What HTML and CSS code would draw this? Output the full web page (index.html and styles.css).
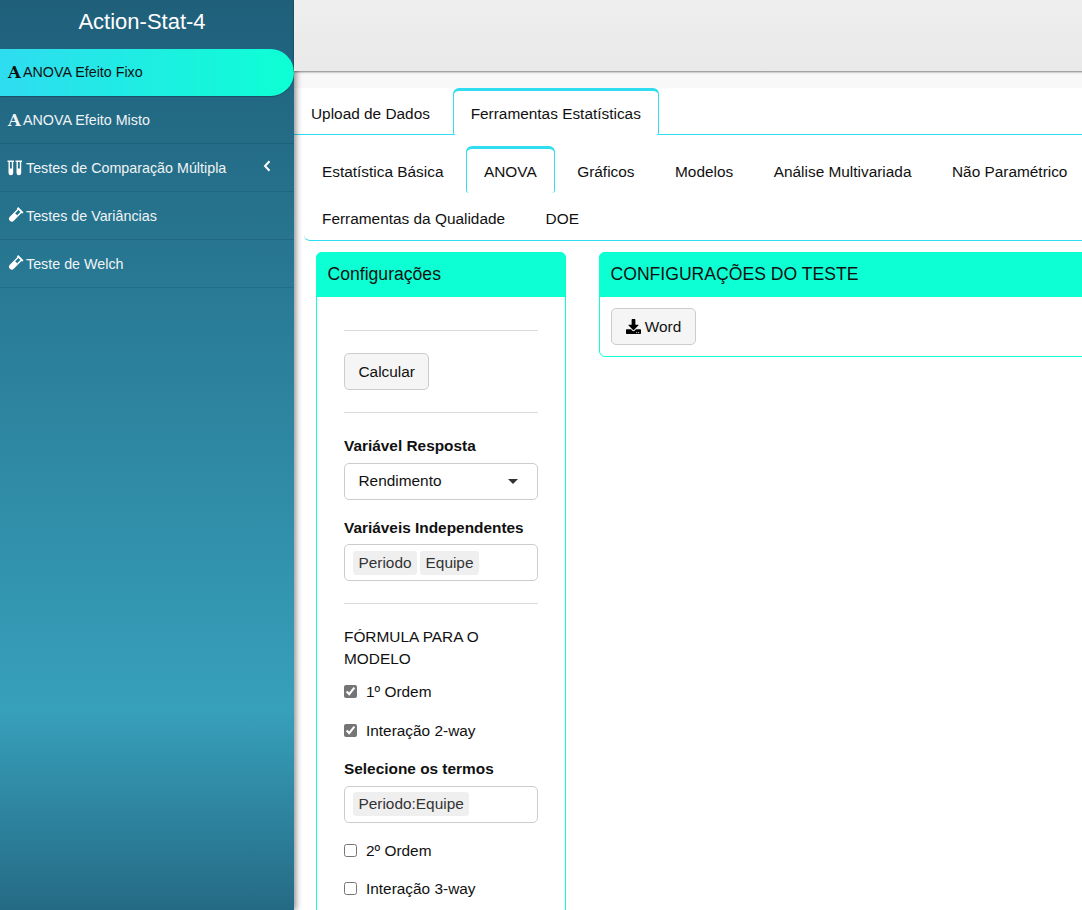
FILE: index.html
```html
<!DOCTYPE html>
<html lang="pt">
<head>
  <meta charset="UTF-8">
  <title>Action-Stat-4</title>
  <link rel="stylesheet" href="styles.css">
</head>
<body>
  <!-- menu lateral -->
  <aside class="sidebar">
    <div class="brand">Action-Stat-4</div>
    <ul class="side-menu">
      <li class="side-item active"><span class="font-icon">A</span> ANOVA Efeito Fixo</li>
      <li class="side-item"><span class="font-icon">A</span> ANOVA Efeito Misto</li>
      <li class="side-item">
        <svg class="side-icon" viewBox="0 0 15 16"><path d="M0.500 0.500h6.500v1.500h-0.800v11a2.350 2.350 0 0 1-4.700 0V2H0.500zM2.900 2v6.500h1.900V2zM8.500 0.500h6.500v1.500h-0.800v11a2.350 2.350 0 0 1-4.700 0V2H8.500zM10.900 2v6.500h1.900V2z" fill="#fff" fill-rule="evenodd"/></svg>
        Testes de Comparação Múltipla
        <svg class="chevron" viewBox="0 0 8 12"><path d="M6.500 1.200L2 6l4.500 4.800" fill="none" stroke="#fff" stroke-width="2"/></svg>
      </li>
      <li class="side-item">
        <svg class="side-icon" viewBox="0 0 16 16"><path transform="rotate(45 8 8)" d="M4 -1.500h8v2h-1V12a3 3 0 0 1-6 0V0.500H4zM6.500 0.500v5h3v-5z" fill="#fff" fill-rule="evenodd"/></svg>
        Testes de Variâncias
      </li>
      <li class="side-item">
        <svg class="side-icon" viewBox="0 0 16 16"><path transform="rotate(45 8 8)" d="M4 -1.500h8v2h-1V12a3 3 0 0 1-6 0V0.500H4zM6.500 0.500v5h3v-5z" fill="#fff" fill-rule="evenodd"/></svg>
        Teste de Welch
      </li>
    </ul>
  </aside>

  <div class="page">
    <header class="topbar"></header>

    <main class="content">
      <!-- abas principais -->
      <ul class="tabs main-tabs">
        <li class="tab">Upload de Dados</li>
        <li class="tab active">Ferramentas Estatísticas</li>
      </ul>

      <ul class="tabs sub-tabs">
        <li class="tab">Estatística Básica</li>
        <li class="tab active">ANOVA</li>
        <li class="tab">Gráficos</li>
        <li class="tab">Modelos</li>
        <li class="tab">Análise Multivariada</li>
        <li class="tab">Não Paramétrico</li>
        <li class="tab">Ferramentas da Qualidade</li>
        <li class="tab">DOE</li>
      </ul>

      <div class="panels">
        <section class="panel">
          <h3 class="panel-title">Configurações</h3>
          <div class="panel-body config-body">
            <hr>
            <button class="btn">Calcular</button>
            <hr>
            <div class="field-label">Variável Resposta</div>
            <div class="select-box single">Rendimento<span class="caret"></span></div>
            <div class="field-label">Variáveis Independentes</div>
            <div class="select-box">
              <span class="tag">Periodo</span>
              <span class="tag">Equipe</span>
            </div>
            <hr>
            <p class="formula-title">FÓRMULA PARA O MODELO</p>
            <label class="check"><input type="checkbox" checked> 1º Ordem</label>
            <label class="check"><input type="checkbox" checked> Interação 2-way</label>
            <div class="field-label">Selecione os termos</div>
            <div class="select-box">
              <span class="tag">Periodo:Equipe</span>
            </div>
            <label class="check"><input type="checkbox"> 2º Ordem</label>
            <label class="check"><input type="checkbox"> Interação 3-way</label>
          </div>
        </section>

        <section class="panel">
          <h3 class="panel-title">CONFIGURAÇÕES DO TESTE</h3>
          <div class="panel-body">
            <button class="btn">
              <svg class="btn-icon" viewBox="0 0 512 512"><path d="M216 0h80c13.300 0 24 10.700 24 24v168h87.700c17.800 0 26.700 21.500 14.100 34.100L269.700 378.300c-7.500 7.500-19.800 7.500-27.300 0L90.100 226.100c-12.600-12.600-3.700-34.100 14.100-34.100H192V24c0-13.300 10.700-24 24-24zm296 376v112c0 13.300-10.700 24-24 24H24c-13.300 0-24-10.700-24-24V376c0-13.300 10.700-24 24-24h146.700l49 49c20.100 20.100 52.500 20.100 72.600 0l49-49H488c13.300 0 24 10.700 24 24zm-124 88c0-11-9-20-20-20s-20 9-20 20 9 20 20 20 20-9 20-20zm64 0c0-11-9-20-20-20s-20 9-20 20 9 20 20 20 20-9 20-20z"/></svg>
              Word
            </button>
          </div>
        </section>
      </div>
    </main>
  </div>
</body>
</html>
```

FILE: styles.css
```css
/* geral */
body {
  margin: 0;
  display: flex;
  height: 910px;
  overflow: hidden;
  background-color: white;
  color: #111;
  font-family: 'Liberation Sans', Arial, sans-serif;
  font-size: 15.400px;
  line-height: 21px;
}

/* menu lateral */
.sidebar {
  position: relative;
  z-index: 2;
  flex: 0 0 294px;
  background: linear-gradient(to bottom, #1f5f7a 0%, #37a0bb 78%, #256a85 100%);
  box-shadow: 2px 0 6px rgba(0, 0, 0, 0.45);
}

.brand {
  height: 49px;
  padding: 7px 10px 0 0;
  box-sizing: border-box;
  text-align: center;
  color: white;
  font-size: 22px;
  line-height: 30px;
}

.side-menu {
  list-style: none;
  margin: 0;
  padding: 0;
}

.side-item {
  display: flex;
  align-items: center;
  gap: 3px;
  height: 48px;
  padding: 1px 0 0 8px;
  border-bottom: 1px solid rgba(0, 40, 60, 0.15);
  box-sizing: border-box;
  color: #f0f4f5;
  font-size: 14.300px;
}

.side-item.active {
  height: 47px;
  padding-top: 0;
  border-bottom: none;
  border-radius: 0 24px 24px 0;
  background: linear-gradient(to right, #2fdcf0, #0dffd4);
  box-shadow: 0 1px 1px rgba(0, 0, 0, 0.25);
  color: #111;
}

.font-icon {
  width: 12px;
  font-family: 'DejaVu Serif', serif;
  font-size: 16.500px;
  font-weight: bold;
}

.side-icon {
  width: 15px;
  height: 16px;
  margin-left: -1px;
  margin-right: 1px;
  overflow: visible;
}

.chevron {
  width: 8px;
  height: 12px;
  margin-left: 34px;
  margin-top: -5px;
}

/* topo */
.page {
  flex: 0 0 800px;
  width: 800px;
}

.topbar {
  position: relative;
  z-index: 3;
  height: 71px;
  background: linear-gradient(to bottom, #eeeeee, #e9e9e9);
  box-shadow: 0 1px 2px rgba(0, 0, 0, 0.5);
}

.content {
  border-top: 17px solid #f8f8f8;
}

/* abas */
.tabs {
  list-style: none;
  margin: 0;
  padding: 0;
  display: flex;
  flex-wrap: wrap;
  border-bottom: 1px solid #2fdcf0;
}

.tab {
  padding: 12px 17px 11px;
  border: 1px solid transparent;
  border-top-width: 3px;
  border-bottom: none;
  border-radius: 6px 6px 3px 3px;
  color: #111;
}

.tab.active {
  border-color: #2fdcf0;
  background-color: white;
}

.main-tabs {
  gap: 4.700px;
  height: 46px;
  margin-left: -1px;
}

.main-tabs .tab.active {
  height: 47px;
  box-sizing: border-box;
}

.sub-tabs {
  gap: 0 4.500px;
  margin: 11px 0 0 10px;
  border-radius: 0 0 0 6px;
}

/* paineis */
.panels {
  display: grid;
  grid-template-columns: 250px 1fr;
  gap: 33px;
  margin: 11px 0 0 22px;
}

.panel {
  border: 1px solid #0dffd4;
  border-radius: 6px;
  align-self: start;
}

.panel-title {
  margin: -1px -1px 0;
  padding: 0 12px 0 11.500px;
  height: 45px;
  line-height: 45px;
  border-radius: 6px 6px 0 0;
  background-color: #0dffd4;
  font-size: 17.600px;
  font-weight: normal;
}

.panel-body {
  padding: 11px;
}

.config-body {
  padding: 33px 27px 0;
  height: 900px;
}

hr {
  margin: 22px 0;
  border: none;
  border-top: 1px solid #d9d9d9;
}

.config-body hr:first-child {
  margin-top: 0;
}

.btn {
  display: block;
  height: 37px;
  padding: 0 13.500px;
  border: 1px solid #ccc;
  border-radius: 5px;
  background-color: #f5f5f5;
  color: #111;
  font-family: inherit;
  font-size: 15.400px;
}

.btn-icon {
  width: 15px;
  height: 15px;
  vertical-align: -2px;
}

/* campos */
.field-label {
  margin-bottom: 6.500px;
  font-weight: bold;
}

.select-box {
  display: flex;
  align-items: center;
  gap: 3px;
  position: relative;
  height: 37px;
  padding: 0 8px;
  border: 1px solid #ccc;
  border-radius: 5px;
  box-sizing: border-box;
  margin-bottom: 17px;
}

.select-box.single {
  padding: 0 13.500px 2px;
}

.caret {
  position: absolute;
  right: 19px;
  top: 15px;
  border-top: 5px solid #333;
  border-left: 5px solid transparent;
  border-right: 5px solid transparent;
}

.tag {
  height: 24px;
  line-height: 24px;
  padding: 0 5.500px;
  border-radius: 3px;
  background-color: #efefef;
  color: #333;
}

.formula-title {
  margin: 0 0 11px;
  line-height: 22px;
}

.check {
  display: flex;
  align-items: center;
  margin-bottom: 17.500px;
}

.check input {
  width: 13px;
  height: 13px;
  margin: 0 9px 0 0;
  accent-color: #757575;
}
```
